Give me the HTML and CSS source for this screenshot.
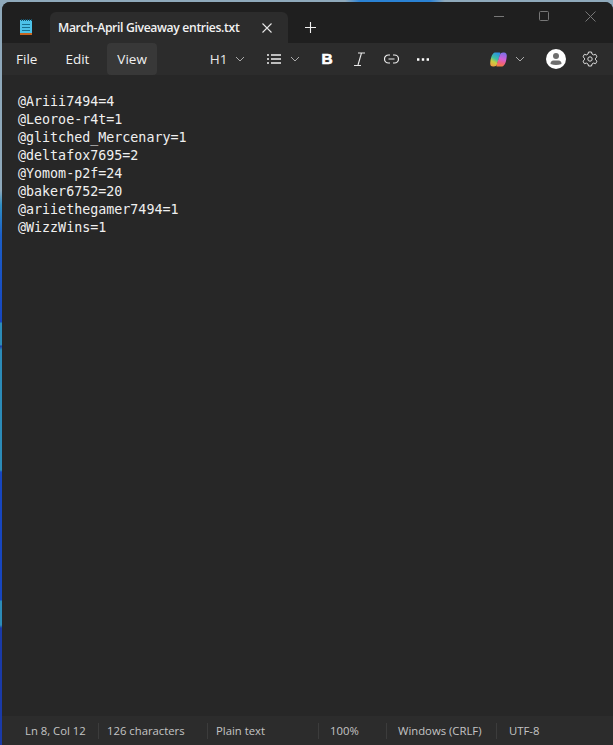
FILE: index.html
```html
<!DOCTYPE html>
<html lang="en">
<head>
    <meta charset="UTF-8">
    <meta name="viewport" content="width=device-width, initial-scale=1.0">
    <title>March-April Giveaway entries.txt</title>
    <link rel="stylesheet" href="styles.css">
</head>
<body>
    <div class="window">
        <div class="titlebar">
            <svg class="app-icon" width="12" height="16" viewBox="0 0 12 16">
                <rect x="0" y="1" width="12" height="15" fill="#4cc2e8"/>
                <rect x="0" y="14" width="12" height="2" fill="#c8641e"/>
                <path d="M1 1h1M3 1h1M5 1h1M7 1h1M9 1h1M11 1h1" stroke="#17536b" stroke-width="2" fill="none"/>
                <path d="M2 5.500h8M2 8.500h8M2 11.500h8" stroke="#17708f" stroke-width="1" fill="none"/>
            </svg>
            <div class="tab">
                <span class="tab-name">March-April Giveaway entries.txt</span>
                <svg class="tab-close" width="10" height="10" viewBox="0 0 10 10"><path d="M0.500 0.500l9 9M9.500 0.500l-9 9" stroke="#e6e6e6" stroke-width="1.100" fill="none"/></svg>
            </div>
            <svg class="tab-add" width="11" height="11" viewBox="0 0 11 11"><path d="M5.500 0v11M0 5.500h11" stroke="#f0f0f0" stroke-width="1.100" fill="none"/></svg>
            <div class="controls">
                <svg width="10" height="11" viewBox="0 0 10 11"><path d="M0 5.500h10" stroke="#777" stroke-width="1" fill="none"/></svg>
                <svg width="11" height="11" viewBox="0 0 11 11"><rect x="0.500" y="0.500" width="9" height="9" rx="1" stroke="#777" fill="none"/></svg>
                <svg width="11" height="11" viewBox="0 0 11 11"><path d="M0.500 0.500l10 10M10.500 0.500l-10 10" stroke="#777" stroke-width="1" fill="none"/></svg>
            </div>
        </div>

        <div class="toolbar">
            <div class="menu">
                <span class="menu-item">File</span>
                <span class="menu-item">Edit</span>
                <span class="menu-item active">View</span>
            </div>
            <div class="format">
                <span class="heading">H1</span>
                <svg class="chev" width="10" height="6" viewBox="0 0 10 6"><path d="M1 1l4 4 4-4" stroke="#aaa" stroke-width="1" fill="none"/></svg>
                <svg class="list-icon" width="14" height="10" viewBox="0 0 14 10"><path d="M0 1h2M4 1h10M0 5h2M4 5h10M0 9h2M4 9h10" stroke="#eee" stroke-width="1.300" fill="none"/></svg>
                <svg class="chev" width="10" height="6" viewBox="0 0 10 6"><path d="M1 1l4 4 4-4" stroke="#aaa" stroke-width="1" fill="none"/></svg>
                <span class="bold">B</span>
                <svg class="italic-icon" width="13" height="14" viewBox="0 0 13 14"><path d="M5 1h7M8.500 1L5 13M1 13.500h7" stroke="#e8e8e8" stroke-width="1.100" fill="none"/></svg>
                <svg class="link-icon" width="15" height="10" viewBox="0 0 15 10"><path d="M6 1H4.500a4 4 0 0 0 0 8H6M9 1h1.500a4 4 0 0 1 0 8H9M4.500 5h6" stroke="#eee" stroke-width="1.200" fill="none"/></svg>
                <svg class="more-icon" width="12" height="3" viewBox="0 0 12 3"><path d="M0 1.500h2.400M4.800 1.500h2.400M9.600 1.500h2.400" stroke="#fff" stroke-width="2.400" fill="none"/></svg>
            </div>
            <div class="account">
                <svg class="copilot" width="17" height="15" viewBox="0 0 17 15">
                    <defs>
                        <linearGradient id="cpLeft" x1="0.700" y1="0" x2="0.300" y2="1">
                            <stop offset="0" stop-color="#2a8fe6"/>
                            <stop offset="0.450" stop-color="#3fc0a0"/>
                            <stop offset="0.700" stop-color="#c8d040"/>
                            <stop offset="1" stop-color="#f0a040"/>
                        </linearGradient>
                        <linearGradient id="cpRight" x1="0.600" y1="0" x2="0.400" y2="1">
                            <stop offset="0" stop-color="#7a70e8"/>
                            <stop offset="0.450" stop-color="#d060d8"/>
                            <stop offset="0.750" stop-color="#f06080"/>
                            <stop offset="1" stop-color="#f08040"/>
                        </linearGradient>
                    </defs>
                    <path d="M5 0.500h4.500q1.200 0 .8 1.200L7 12.500Q6.300 14.500 4 14.500H3Q0 14.500 0.200 11 0.800 4 3 1.700 4 0.500 5 0.500z" fill="url(#cpLeft)"/>
                    <path d="M10 14.500H7q-1 0-.6-1.200L10 2.500Q10.700 0.500 13 0.500h1q2.800 0 2.800 3.500-.6 7-2.800 9.300-1 1.200-2 1.200z" fill="url(#cpRight)"/>
                </svg>
                <svg class="chev chev-copilot" width="10" height="6" viewBox="0 0 10 6"><path d="M1 1l4 4 4-4" stroke="#aaa" stroke-width="1" fill="none"/></svg>
                <svg class="avatar" width="20" height="20" viewBox="0 0 20 20">
                    <circle cx="10" cy="10" r="10" fill="#fff"/>
                    <circle cx="10" cy="7" r="3" fill="#6e6e6e"/>
                    <path d="M4.500 15q0-3.500 3-3.500h5q3 0 3 3.500q-5.500 2-11 0z" fill="#6e6e6e"/>
                </svg>
                <svg class="gear" width="16" height="16" viewBox="0 0 16 16"><path d="M6.500 1h3l.5 2 1.600.9 2-.6 1.400 2.500-1.500 1.400v1.600l1.500 1.400-1.400 2.500-2-.6-1.600.9-.5 2h-3l-.5-2-1.600-.9-2 .6L1 10.200l1.500-1.400V7.200L1 5.800l1.400-2.500 2 .6L6 3z" stroke="#ddd" stroke-width="1" stroke-linejoin="round" fill="none"/><circle cx="8" cy="8" r="2.200" stroke="#ddd" fill="none"/></svg>
            </div>
        </div>

        <pre class="editor">@Ariii7494=4
@Leoroe-r4t=1
@glitched_Mercenary=1
@deltafox7695=2
@Yomom-p2f=24
@baker6752=20
@ariiethegamer7494=1
@WizzWins=1</pre>

        <div class="statusbar">
            <span class="cell cell-pos">Ln 8, Col 12</span>
            <span class="cell cell-chars">126 characters</span>
            <span class="cell cell-type">Plain text</span>
            <span class="cell cell-zoom">100%</span>
            <span class="cell cell-eol">Windows (CRLF)</span>
            <span class="cell cell-enc">UTF-8</span>
        </div>
    </div>
</body>
</html>
```

FILE: styles.css
```css
html, body {
    height: 100%;
}
body {
    margin: 0;
    overflow: hidden;
    background:
        linear-gradient(to right, #8fa9bb 345px, #2a82d4 360px, #2a82d4 430px, #8fa9bb 445px) top / 100% 2px no-repeat,
        linear-gradient(to bottom, #8fa9bb 0, #8fa9bb 190px, #2f8fc4 205px, #1c5fc8 235px, #1746c0 322px, #2c8cb8 323px, #2c8cb8 345px, #1a3aa8 346px, #2c8cb8 350px, #2c8cb8 470px, #1746c0 472px, #1746c0 600px, #2c8cb8 601px, #2c8cb8 625px, #1a3aa8 628px, #1a3aa8 100%);
    font-family: "Open Sans", "Noto Sans", sans-serif;
    color: #fff;
}
.window {
    height: calc(100% - 2px);
    margin: 2px 0 0 2px;
    display: flex;
    flex-direction: column;
    background-color: #272727;
    border-top-left-radius: 8px;
    border-top-right-radius: 8px;
    overflow: hidden;
}

.titlebar {
    height: 41px;
    flex: none;
    display: flex;
    align-items: flex-end;
    background-color: #1f1f1f;
}
.app-icon {
    margin: 0 0 8px 18px;
}
.tab {
    width: 238px;
    height: 31px;
    margin-left: 18px;
    display: flex;
    align-items: center;
    justify-content: space-between;
    padding: 0 16px 0 8px;
    box-sizing: border-box;
    background-color: #2c2c2c;
    border-radius: 6px 6px 0 0;
}
.tab-name {
    font-size: 12.200px;
    font-weight: 600;
    color: #f2f2f2;
    white-space: nowrap;
    letter-spacing: -0.350px;
}
.tab-add {
    margin: 0 0 10px 17px;
}
.controls {
    margin-left: auto;
    align-self: flex-start;
    display: flex;
    gap: 35px;
    padding: 9px 17px 0 0;
}

.toolbar {
    height: 32px;
    flex: none;
    display: flex;
    align-items: center;
    background-color: #2c2c2c;
}
.menu {
    display: flex;
    align-items: center;
    gap: 8px;
}
.menu-item {
    height: 32px;
    line-height: 33px;
    padding: 0 10px;
    font-size: 13.500px;
    color: #f0f0f0;
    border-radius: 4px;
}
.menu-item:first-child {
    padding: 0 10px 0 14px;
}
.menu-item.active {
    background-color: #383838;
}
.format {
    display: flex;
    align-items: center;
    margin-left: 53px;
}
.heading {
    font-size: 13.500px;
    color: #e8e8e8;
    margin-right: 7px;
}
.list-icon {
    margin-left: 22px;
}
.list-icon + .chev {
    margin-left: 9px;
}
.bold {
    margin-left: 22px;
    font-size: 15.500px;
    font-weight: 700;
    font-family: "Liberation Sans", sans-serif;
    -webkit-text-stroke: 0.600px #fff;
}
.italic-icon {
    margin-left: 20px;
}
.link-icon {
    margin-left: 18px;
}
.more-icon {
    margin-left: 18px;
}
.account {
    margin-left: auto;
    display: flex;
    align-items: center;
    padding-right: 15px;
}
.chev-copilot {
    margin-left: 8px;
}
.avatar {
    margin-left: 21px;
}
.gear {
    margin-left: 16px;
}

.editor {
    flex: 1;
    margin: 0;
    padding: 18px 0 0 16px;
    font-family: "DejaVu Sans Mono", "Liberation Mono", monospace;
    font-size: 13.330px;
    line-height: 18px;
    color: #f0f0f0;
    background-color: #272727;
}

.statusbar {
    height: 29px;
    flex: none;
    display: flex;
    align-items: center;
    background-color: #2c2c2c;
    font-size: 11.300px;
    color: #c4c4c4;
}
.cell {
    height: 16px;
    line-height: 16px;
    box-sizing: border-box;
    padding-left: 8px;
    border-left: 1px solid #3c3c3c;
    white-space: nowrap;
}
.cell-pos {
    width: 96px;
    padding-left: 23px;
    border-left: 0;
}
.cell-chars { width: 109px; }
.cell-type { width: 111px; }
.cell-zoom { width: 68px; padding-left: 11px; }
.cell-eol { width: 110px; padding-left: 11px; }
.cell-enc { padding-left: 12px; }
```
